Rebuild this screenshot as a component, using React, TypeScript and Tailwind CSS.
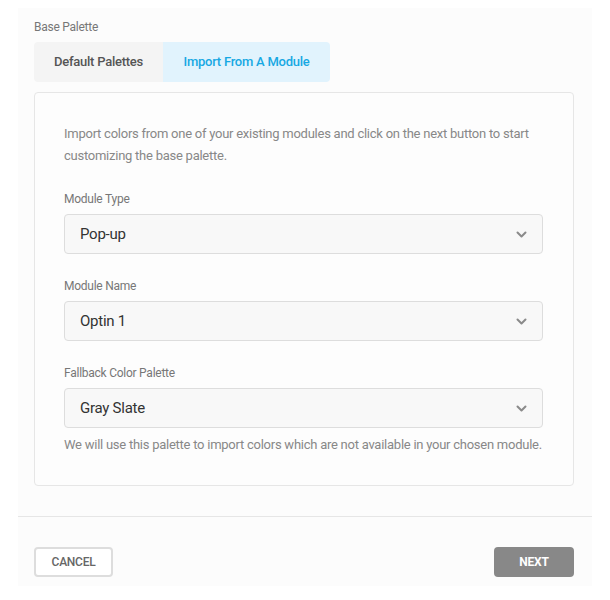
import React, { useState } from "react";

const font = { fontFamily: "Roboto, 'Open Sans', sans-serif" };

function Chevron() {
  return (
    <svg width="11" height="7" viewBox="0 0 11 7" className="text-[#8a8a8a]">
      <path
        d="M1.5 1.5l4 4 4-4"
        fill="none"
        stroke="currentColor"
        strokeWidth="2"
        strokeLinecap="round"
        strokeLinejoin="round"
      />
    </svg>
  );
}

function SelectField({ label, value }: { label: string; value: string }) {
  return (
    <div className="flex flex-col">
      <label className="text-[12px] leading-[16px] text-[#777] mb-[7px]">{label}</label>
      <div className="flex items-center justify-between h-[40px] pl-[15px] pr-[15px] bg-[#f8f8f8] border border-[#dddddd] rounded-[4px]">
        <span className="text-[15px] text-[#333]">{value}</span>
        <Chevron />
      </div>
    </div>
  );
}

export default function App() {
  const [tab, setTab] = useState("import");

  return (
    <div className="w-[610px] h-[600px] bg-white tracking-[-0.25px]" style={font}>
      <div className="mx-[18px] mt-[8px] h-[578px] bg-[#fcfcfc] flex flex-col">
        <div className="pl-[16px] pr-[18px] pt-[11px]">
          {/* Base palette tabs */}
          <p className="text-[12px] leading-[16px] text-[#777] mb-[7px]">Base Palette</p>
          <div className="flex">
            <button
              onClick={() => setTab("default")}
              className={`h-[40px] w-[129px] text-[13px] font-medium rounded-l-[4px] ${
                tab === "default" ? "bg-[#e1f3fd] text-[#17a8e3]" : "bg-[#f4f4f4] text-[#555]"
              }`}
            >
              Default Palettes
            </button>
            <button
              onClick={() => setTab("import")}
              className={`h-[40px] w-[167px] text-[13px] font-medium rounded-r-[4px] ${
                tab === "import" ? "bg-[#e1f3fd] text-[#17a8e3]" : "bg-[#f4f4f4] text-[#555]"
              }`}
            >
              Import From A Module
            </button>
          </div>

          {/* Card */}
          <div className="mt-[10px] h-[394px] border border-[#e6e6e6] rounded-[4px] bg-[#fdfdfd] pl-[29px] pr-[30px] pt-[30px]">
            <p className="text-[13px] leading-[22px] text-[#888]">
              Import colors from one of your existing modules and click on the next button to start
              customizing the base palette.
            </p>
            <div className="mt-[24px] flex flex-col gap-[24px]">
              <SelectField label="Module Type" value="Pop-up" />
              <SelectField label="Module Name" value="Optin 1" />
              <div>
                <SelectField label="Fallback Color Palette" value="Gray Slate" />
                <p className="mt-[7px] text-[13px] leading-[20px] text-[#888] whitespace-nowrap">
                  We will use this palette to import colors which are not available in your chosen module.
                </p>
              </div>
            </div>
          </div>
        </div>

        <div className="mt-[30px] border-t border-[#e6e6e6]" />

        <div className="flex justify-between pl-[16px] pr-[18px] pt-[30px]">
          <button className="h-[30px] w-[79px] border-2 border-[#dddddd] rounded-[4px] bg-white text-[12px] font-medium text-[#666]">
            CANCEL
          </button>
          <button className="h-[30px] w-[80px] rounded-[4px] bg-[#888] text-[12px] font-bold text-white">
            NEXT
          </button>
        </div>
      </div>
    </div>
  );
}
